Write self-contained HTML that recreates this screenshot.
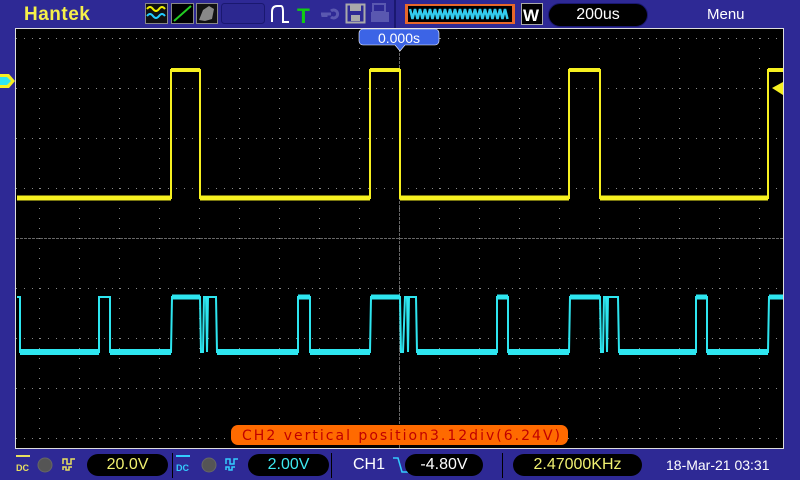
<!DOCTYPE html>
<html><head><meta charset="utf-8"><style>
body{margin:0;width:800px;height:480px;background:#2e2995;overflow:hidden;position:relative;font-family:"Liberation Sans","DejaVu Sans",sans-serif}
.a{position:absolute}
.pill{position:absolute;background:#000;border-radius:12px;color:#fff;text-align:center;font-size:16px;line-height:22px}
</style></head><body>
<div class="a" style="left:24px;top:4px;color:#f5f04a;font-weight:bold;font-size:19px;letter-spacing:0.5px">Hantek</div>
<svg class="a" style="left:0;top:0" width="800" height="28">
<rect x="145.5" y="3.5" width="22" height="20" fill="#111" stroke="#888"/>
<path d="M147 9 q3-4 6 0 t6 0 t6 0" stroke="#ee0" stroke-width="2" fill="none"/>
<path d="M147 16 q3-4 6 0 t6 0 t6 0" stroke="#2cf" stroke-width="2" fill="none"/>
<rect x="171.5" y="3.5" width="22" height="20" fill="#000" stroke="#888"/>
<path d="M174 21 L191 6" stroke="#2c2" stroke-width="2"/>
<rect x="196.5" y="3.5" width="21" height="20" fill="#111" stroke="#888"/>
<path d="M199 20 L203 10 L209 6 L214 9 L212 19 L205 21Z" fill="#888"/>
<rect x="221.5" y="3.5" width="43" height="20" rx="3" fill="#2c2890" stroke="#1a1870"/>
<path d="M272 22 V12 Q272 6 277 6 L281 6 Q283 6 283 12 V22 H289" stroke="#fff" stroke-width="2" fill="none"/>
<text x="297" y="23" fill="#1c1" font-size="21" font-weight="bold" font-family="Liberation Sans">T</text>
<path d="M321 14 h10 M331 11 a4 4 0 1 1 0 6 M323 14 v3 M326 14 v3" stroke="#5a58b0" stroke-width="3" fill="none"/>
<rect x="346.5" y="4.5" width="18" height="18" fill="none" stroke="#aaa" stroke-width="2"/>
<rect x="350" y="5" width="11" height="6" fill="#aaa"/><rect x="351" y="15" width="9" height="6" fill="#aaa"/>
<rect x="373" y="4" width="12" height="8" fill="none" stroke="#5a58b0" stroke-width="2"/>
<rect x="371" y="12" width="18" height="10" fill="#5a58b0"/>
<rect x="394" y="0" width="2" height="28" fill="#1a1870"/>
<rect x="405" y="4" width="110" height="20" fill="#e8672a"/>
<rect x="408" y="6" width="104" height="16" fill="#000"/>
<path d="M410 9 l2.5 10 l2.5-10 l2.5 10 l2.5-10 l2.5 10 l2.5-10 l2.5 10 l2.5-10 l2.5 10 l2.5-10 l2.5 10 l2.5-10 l2.5 10 l2.5-10 l2.5 10 l2.5-10 l2.5 10 l2.5-10 l2.5 10 l2.5-10 l2.5 10 l2.5-10 l2.5 10 l2.5-10 l2.5 10 l2.5-10 l2.5 10 l2.5-10 l2.5 10 l2.5-10 l2.5 10 l2.5-10 l2.5 10 l2.5-10 l2.5 10 l2.5-10 l2.5 10 l2.5-10 l2.5 10" stroke="#3ce" stroke-width="2.5" fill="none"/>
<rect x="521.5" y="3.5" width="21" height="21" fill="#000" stroke="#aaa"/>
<text x="523" y="21" fill="#fff" font-size="17" font-weight="bold" font-family="Liberation Sans">W</text>
</svg>
<div class="pill" style="left:548px;top:3px;width:98px;border:1px solid #1a1870">200us</div>
<div class="a" style="left:707px;top:6px;color:#fff;font-size:15px">Menu</div>

<svg class="a" style="left:0;top:0" width="800" height="480">
<rect x="15" y="28" width="769" height="421" fill="#ddd"/>
<rect x="16" y="29" width="767" height="419" fill="#000"/>
<defs>
<pattern id="ph" x="0" y="0" width="8" height="50" patternUnits="userSpaceOnUse"><rect x="0" y="38" width="1" height="1" fill="#888"/></pattern>
<pattern id="pv" x="0" y="0" width="40" height="10" patternUnits="userSpaceOnUse"><rect x="39" y="8" width="1" height="1" fill="#888"/></pattern>
</defs>
<rect x="16" y="29" width="767" height="419" fill="url(#ph)"/>
<rect x="16" y="29" width="767" height="419" fill="url(#pv)"/>
<line x1="16" y1="238.5" x2="783" y2="238.5" stroke="#666" stroke-dasharray="3 1"/>
<line x1="399.5" y1="29" x2="399.5" y2="448" stroke="#666" stroke-dasharray="3 1"/>
<path d="M363 29 h72 a4 4 0 0 1 4 4 v8 a4 4 0 0 1 -4 4 h-30 l-5 6 l-5 -6 h-32 a4 4 0 0 1 -4 -4 v-8 a4 4 0 0 1 4 -4z" fill="#3c64e6" stroke="#fff" stroke-width="0.6"/>
<text x="399" y="43" fill="#fff" font-size="14" text-anchor="middle" font-family="Liberation Sans">0.000s</text>
<polyline points="17,198 171,198 171,70 200,70 200,198 370,198 370,70 400,70 400,198 569,198 569,70 600,70 600,198 768,198 768,70 783,70" fill="none" stroke="#f6f020" stroke-width="2"/>
<path d="M17 198 H171 M200 198 H370 M400 198 H569 M600 198 H768" stroke="#f6f020" stroke-width="5"/>
<path d="M171 70 H200 M370 70 H400 M569 70 H600 M768 70 H783" stroke="#f6f020" stroke-width="4"/>
<polyline points="17,297 20,297 20,352 99,352 99,297 110,297 110,352 171,352 172,297 200,297 201,352 203,352 204,297 206,297 207,352 208,297 216,297 217,352 298,352 298,297 310,297 310,352 370,352 371,297 400,297 401,352 403,352 405,297 407,297 408,352 409,297 416,297 417,352 497,352 497,297 508,297 508,352 569,352 570,297 600,297 601,352 603,352 604,297 606,297 607,352 608,297 618,297 619,352 696,352 696,297 707,297 707,352 768,352 769,297 783,297" fill="none" stroke="#2ee6f0" stroke-width="2"/>
<path d="M20 352 H99 M110 352 H171 M217 352 H298 M310 352 H370 M417 352 H497 M508 352 H569 M619 352 H696 M707 352 H768" stroke="#2ee6f0" stroke-width="6"/>
<path d="M172 297 H200 M298 297 H310 M371 297 H400 M497 297 H508 M570 297 H600 M696 297 H707 M769 297 H783" stroke="#2ee6f0" stroke-width="5"/>
<path d="M772 88 L783 82 V95 Z" fill="#f6f020"/>
<path d="M0 74 h9 l6 7 l-6 7 h-9z" fill="#f6f020"/>
<path d="M0 77 h7 l4 4 l-4 4 h-7z" fill="#2ee6f0"/>
<rect x="231" y="425" width="337" height="20" rx="7" fill="#ff6a00"/>
<text x="242" y="440" fill="#c00000" font-size="14" font-family="DejaVu Sans" textLength="318">CH2 vertical position3.12div(6.24V)</text>
<line x1="172.5" y1="453" x2="172.5" y2="478" stroke="#000"/>
<line x1="331.5" y1="453" x2="331.5" y2="478" stroke="#000"/>
<line x1="502.5" y1="453" x2="502.5" y2="478" stroke="#000"/>
<g font-family="Liberation Sans" font-size="9" font-weight="bold">
<rect x="16" y="455" width="14" height="2" fill="#e8e060"/><text x="16" y="471" fill="#e8e060">DC</text>
<circle cx="45" cy="465" r="7" fill="#555" stroke="#666"/>
<path d="M63 464 v-5 h4 v5 h4 v-5 h4 M63 470 v-3 h3 v3 h3 v-3 h3" stroke="#e8e060" stroke-width="1.5" fill="none"/>
<rect x="176" y="455" width="14" height="2" fill="#3cf"/><text x="176" y="471" fill="#3cf">DC</text>
<circle cx="209" cy="465" r="7" fill="#555" stroke="#666"/>
<path d="M226 464 v-5 h4 v5 h4 v-5 h4 M226 470 v-3 h3 v3 h3 v-3 h3" stroke="#3cf" stroke-width="1.5" fill="none"/>
</g>
<path d="M393 458 h5 l4 14 h6" stroke="#3cf" stroke-width="1.5" fill="none"/>
</svg>
<div class="pill" style="left:87px;top:454px;width:81px;color:#f0f070">20.0V</div>
<div class="pill" style="left:248px;top:454px;width:81px;color:#3ee8f0">2.00V</div>
<div class="a" style="left:353px;top:456px;color:#fff;font-size:16px">CH1</div>
<div class="pill" style="left:405px;top:454px;width:78px;color:#fff">-4.80V</div>
<div class="pill" style="left:513px;top:454px;width:129px;color:#f0f070">2.47000KHz</div>
<div class="a" style="left:666px;top:457px;color:#fff;font-size:14px">18-Mar-21 03:31</div>
</body></html>
